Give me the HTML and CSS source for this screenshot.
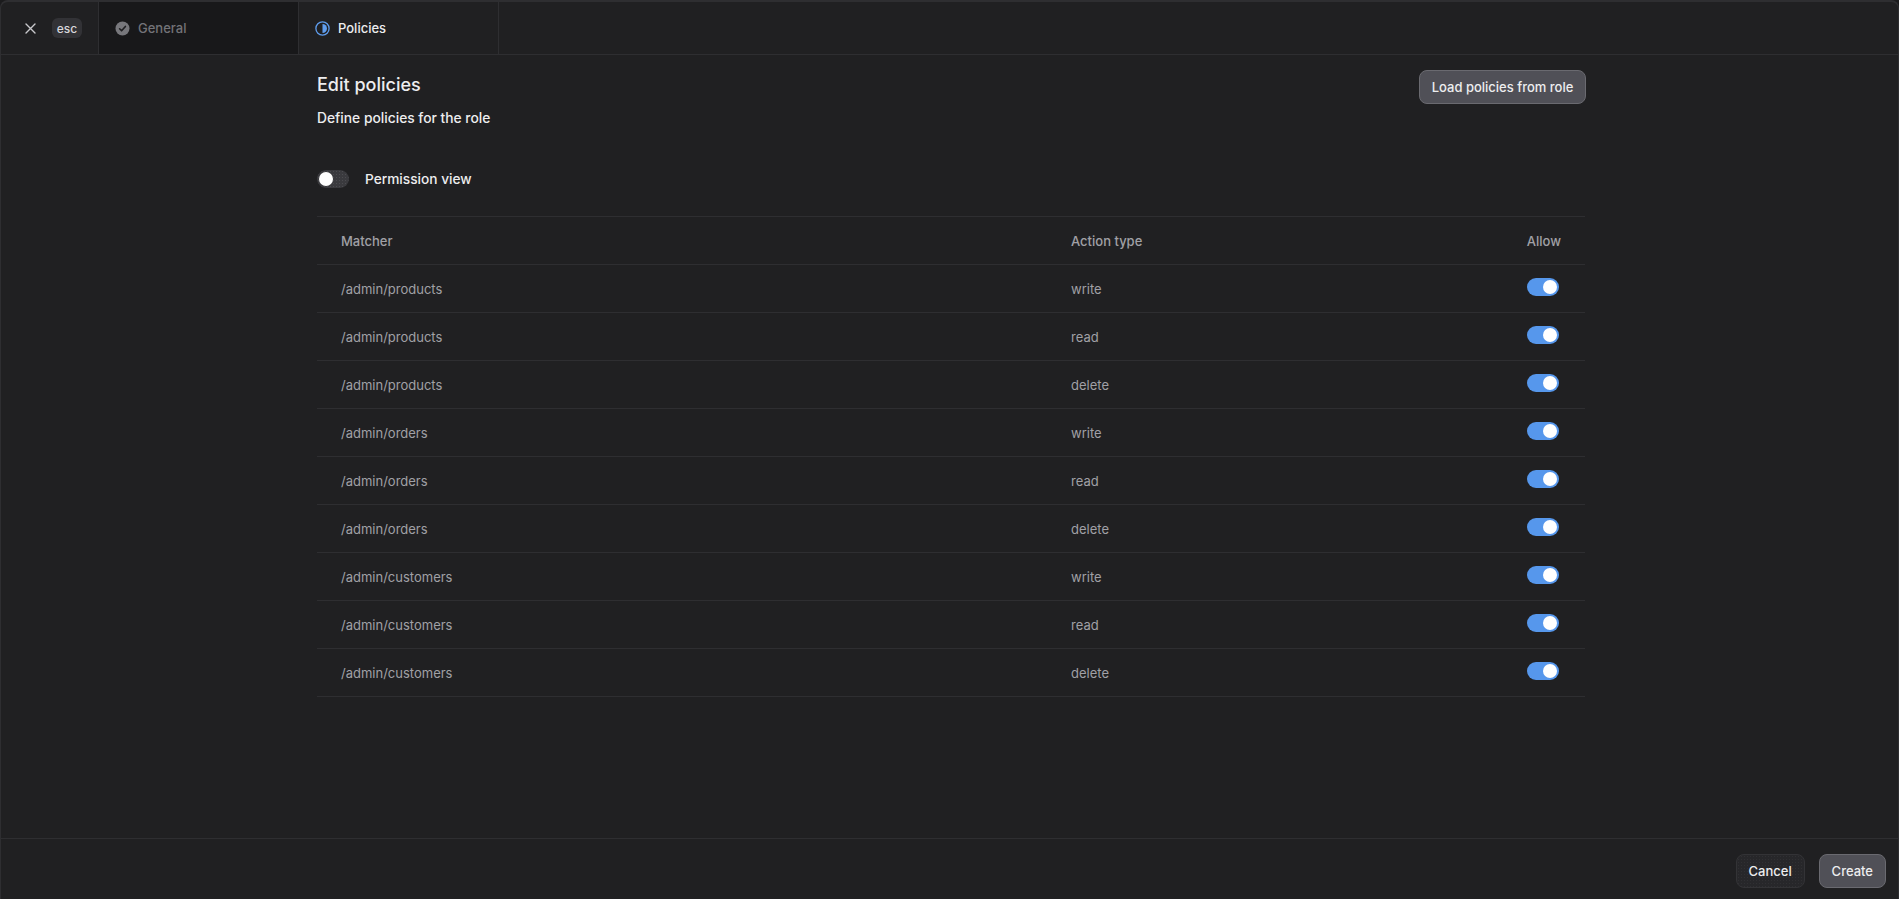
FILE: index.html
```html
<!DOCTYPE html>
<html lang="en">
<head>
  <meta charset="UTF-8" />
  <title>Edit policies</title>
  <link rel="stylesheet" href="styles.css">
</head>
<body>
  <div class="modal">
    <div class="tabs">
      <div class="tab-close">
        <svg class="close-icon" width="15" height="15" viewBox="0 0 15 15"><path d="M3 3l9 9M12 3l-9 9" stroke="#c8c8cc" stroke-width="1.4" stroke-linecap="round" fill="none"/></svg>
        <span class="kbd">esc</span>
      </div>
      <div class="tab tab-done">
        <svg width="15" height="15" viewBox="0 0 15 15"><circle cx="7.5" cy="7.5" r="7" fill="#77777c"/><path d="M4.6 7.8l2 2 3.8-4.4" stroke="#1f1f22" stroke-width="1.6" stroke-linecap="round" stroke-linejoin="round" fill="none"/></svg>
        <span>General</span>
      </div>
      <div class="tab tab-active">
        <svg width="15" height="15" viewBox="0 0 15 15"><circle cx="7.5" cy="7.5" r="6.6" fill="none" stroke="#5f9dee" stroke-width="1.3"/><path d="M7.5 3a4.5 4.5 0 0 1 0 9z" fill="#5f9dee"/></svg>
        <span>Policies</span>
      </div>
    </div>

    <div class="content">
      <div class="head">
        <div>
          <h1>Edit policies</h1>
          <p>Define policies for the role</p>
        </div>
        <button class="btn btn-secondary btn-load">Load policies from role</button>
      </div>

      <div class="perm">
        <span class="switch switch-off"><i></i></span>
        <span>Permission view</span>
      </div>

      <table class="policies">
        <thead>
          <tr><th>Matcher</th><th class="col-action">Action type</th><th class="col-allow">Allow</th></tr>
        </thead>
        <tbody>
          <tr><td>/admin/products</td><td>write</td><td class="col-allow"><span class="switch"><i></i></span></td></tr>
          <tr><td>/admin/products</td><td>read</td><td class="col-allow"><span class="switch"><i></i></span></td></tr>
          <tr><td>/admin/products</td><td>delete</td><td class="col-allow"><span class="switch"><i></i></span></td></tr>
          <tr><td>/admin/orders</td><td>write</td><td class="col-allow"><span class="switch"><i></i></span></td></tr>
          <tr><td>/admin/orders</td><td>read</td><td class="col-allow"><span class="switch"><i></i></span></td></tr>
          <tr><td>/admin/orders</td><td>delete</td><td class="col-allow"><span class="switch"><i></i></span></td></tr>
          <tr><td>/admin/customers</td><td>write</td><td class="col-allow"><span class="switch"><i></i></span></td></tr>
          <tr><td>/admin/customers</td><td>read</td><td class="col-allow"><span class="switch"><i></i></span></td></tr>
          <tr><td>/admin/customers</td><td>delete</td><td class="col-allow"><span class="switch"><i></i></span></td></tr>
        </tbody>
      </table>
    </div>

    <div class="footer">
      <button class="btn btn-ghost">Cancel</button>
      <button class="btn btn-secondary">Create</button>
    </div>
  </div>
</body>
</html>
```

FILE: styles.css
```css
html, body {
  height: 100%;
}

body {
  margin: 0;
  background: #1b1b1d;
  font-family: Inter, "Liberation Sans", sans-serif;
  font-size: 13px;
  color: #ededef;
}

.modal {
  box-sizing: border-box;
  height: 899px;
  display: flex;
  flex-direction: column;
  background: #202022;
  border: 1px solid #2e2e31;
  border-top-width: 2px;
  border-bottom: none;
  border-radius: 8px 8px 0 0;
}

.tabs {
  flex: none;
  height: 52px;
  display: flex;
  border-bottom: 1px solid #2e2e31;
}

.tab-close {
  width: 98px;
  display: flex;
  align-items: center;
  padding-left: 22px;
  box-sizing: border-box;
  border-right: 1px solid #2e2e31;
}

.close-icon {
  margin-right: 14px;
}

.kbd {
  width: 30px;
  height: 20px;
  display: flex;
  align-items: center;
  justify-content: center;
  border-radius: 6px;
  background: #323236;
  font-size: 12px;
  font-weight: 500;
  color: #d8d8dc;
}

.tab {
  width: 200px;
  box-sizing: border-box;
  display: flex;
  align-items: center;
  gap: 8px;
  padding-left: 16px;
  font-weight: 500;
  border-right: 1px solid #2e2e31;
}

.tab-done {
  background-color: #18181a;
  background-image: radial-gradient(#232325 0.6px, transparent 0.7px);
  background-size: 4px 4px;
  color: #737378;
}

.tab-active {
  color: #ededef;
}

.content {
  flex: 1;
  width: 1268px;
  margin-left: 316px;
}

.head {
  display: flex;
  justify-content: space-between;
  align-items: flex-start;
  padding-top: 18px;
}

h1 {
  margin: 0;
  font-size: 18px;
  line-height: 24px;
  font-weight: 500;
}

.head p {
  margin: 11px 0 0;
  font-size: 13.8px;
  line-height: 20px;
  font-weight: 500;
}

.btn {
  height: 34px;
  padding: 0 12px;
  border-radius: 8px;
  font-family: inherit;
  font-size: 13px;
  font-weight: 500;
  color: #ededef;
}

.btn-secondary {
  background: #505057;
  border: 1px solid #6a6a70;
}

.btn-ghost {
  width: 69px;
  padding: 0;
  background-color: #27272a;
  background-image: radial-gradient(#303033 0.6px, transparent 0.7px);
  background-size: 3px 3px;
  border: 1px solid #333336;
}

.btn-load {
  width: 167px;
  margin-top: -3px;
  margin-right: -1px;
  padding: 0;
}

.perm {
  display: flex;
  align-items: center;
  gap: 16px;
  margin-top: 41px;
  height: 20px;
  font-size: 13.7px;
  font-weight: 500;
}

.switch {
  position: relative;
  display: inline-block;
  width: 32px;
  height: 18px;
  border-radius: 9px;
  background: #5697ec;
  vertical-align: middle;
  margin-right: 2px;
  top: -2px;
}

.switch i {
  position: absolute;
  top: 2px;
  right: 2px;
  width: 14px;
  height: 14px;
  border-radius: 50%;
  background: #fff;
}

.switch-off {
  top: 0;
  margin-right: 0;
  background-color: #3a3a3e;
  background-image: radial-gradient(#4c4c50 0.6px, transparent 0.7px);
  background-size: 3px 3px;
}

.switch-off i {
  left: 2px;
  right: auto;
}

.policies {
  width: 100%;
  margin-top: 27px;
  border-collapse: collapse;
  border-top: 1px solid #2e2e31;
  table-layout: fixed;
}

.policies th,
.policies td {
  height: 47px;
  padding: 0 24px;
  border-bottom: 1px solid #2e2e31;
  text-align: left;
  font-size: 13px;
  font-weight: 400;
  color: #a0a0a6;
}

.policies th {
  font-weight: 500;
}

.policies th:first-child {
  width: 682px;
}

.col-action {
  width: 350px;
}

.policies .col-allow {
  text-align: right;
}

.footer {
  flex: none;
  height: 61px;
  display: flex;
  justify-content: flex-end;
  align-items: flex-start;
  gap: 14px;
  padding: 15px 12px 0 0;
  box-sizing: border-box;
  border-top: 1px solid #2e2e31;
}
```
